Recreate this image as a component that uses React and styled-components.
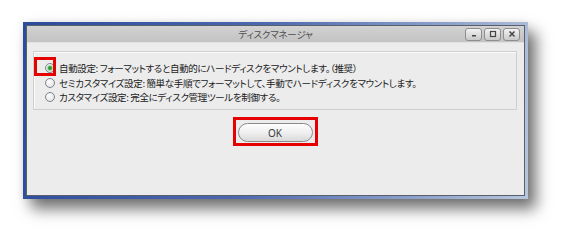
import React from 'react'
import styled, { createGlobalStyle } from 'styled-components'

const GlobalStyle = createGlobalStyle`
    html, body {
        margin: 0;
        padding: 0;
        background: #ffffff;
    }
    body {
        font-family: "Noto Sans CJK JP", "Noto Sans", sans-serif;
        font-feature-settings: "palt";
    }
`

const Page = styled.div`
    width: 570px;
    height: 241px;
    padding: 22px 0 0 23px;
    box-sizing: border-box;
    overflow: hidden;
`

const Window = styled.div`
    width: 505px;
    height: 177px;
    box-sizing: border-box;
    padding: 3px;
    background: linear-gradient(100deg, #2b4b9b 0%, #4c68ae 45%, #8ea3cc 80%, #b8c6dc 100%);
    box-shadow: 8px 10px 14px rgba(0, 0, 0, 0.55), 0 0 8px rgba(0, 0, 0, 0.08);
    display: flex;
`

const Frame = styled.div`
    flex: 1;
    display: flex;
    flex-direction: column;
    border: 1px solid #59606c;
    background: #ececec;
`

const TitleBar = styled.div`
    height: 17px;
    display: grid;
    grid-template-columns: 1fr auto 1fr;
    align-items: center;
    background: linear-gradient(#d2d2d2, #c3c3c3);
    border-bottom: 1px solid #e2e2e2;
    box-sizing: border-box;
`

const Title = styled.span`
    grid-column: 2;
    font-size: 9.5px;
    color: #4d4d4d;
    letter-spacing: -0.2px;
`

const Controls = styled.div`
    grid-column: 3;
    justify-self: end;
    display: flex;
    gap: 2px;
    margin-right: 4px;
`

const CtrlButton = styled.span`
    width: 17px;
    height: 13px;
    box-sizing: border-box;
    border: 1px solid #8d8d8d;
    border-radius: 3px;
    background: linear-gradient(#f2f2f2, #c9c9c9);
    display: flex;
    align-items: center;
    justify-content: center;
`

const Body = styled.div`
    flex: 1;
    padding: 8px 7px 0 6px;
    display: flex;
    flex-direction: column;
    align-items: center;
`

const GroupBox = styled.div`
    align-self: stretch;
    height: 59px;
    box-sizing: border-box;
    border: 1px solid #cfcfcf;
    box-shadow: inset 1px 1px 0 #fafafa;
    padding: 9px 0 0 11px;
    display: flex;
    flex-direction: column;
`

const Option = styled.label`
    position: relative;
    display: flex;
    align-items: center;
    height: 14.5px;
    font-size: 9.5px;
    letter-spacing: -0.35px;
    color: #1a1a1a;
    white-space: nowrap;
`

const Radio = styled.span`
    width: 10px;
    height: 10px;
    box-sizing: border-box;
    border-radius: 50%;
    border: 1px solid #7d8590;
    background: radial-gradient(circle at 40% 35%, #ffffff, #dcdcdc);
    margin-right: 4px;
    display: flex;
    align-items: center;
    justify-content: center;
    &::after {
        content: "";
        width: 4px;
        height: 4px;
        border-radius: 50%;
        background: ${p => (p.$checked ? '#2f9a35' : 'transparent')};
        box-shadow: ${p => (p.$checked ? '0 0 1px 1px rgba(80,190,80,0.5)' : 'none')};
    }
`

const Marker = styled.span`
    position: absolute;
    left: -11px;
    top: -4px;
    width: 22px;
    height: 19px;
    box-sizing: border-box;
    border: 3px solid #e60000;
    pointer-events: none;
`

const Highlight = styled.div`
    margin-top: 7px;
    border: 3px solid #e60000;
    padding: 3px 2px 1px;
`

const OkButton = styled.button`
    display: block;
    width: 75px;
    height: 19px;
    border: 1px solid #8a8a8a;
    border-radius: 10px;
    background: linear-gradient(#fdfdfd 0%, #f0f0f0 50%, #d9d9d9 100%);
    font-family: "Noto Sans", "Liberation Sans", sans-serif;
    font-size: 10px;
    color: #3a3a3a;
    padding: 0;
`

const options = [
    { label: '自動設定: フォーマットすると自動的にハードディスクをマウントします。（推奨）', checked: true },
    { label: 'セミカスタマイズ設定: 簡単な手順でフォーマットして、手動でハードディスクをマウントします。' },
    { label: 'カスタマイズ設定: 完全にディスク管理ツールを制御する。' },
]

function App() {
    return (
        <Page>
            <GlobalStyle />
            <Window>
                <Frame>
                    <TitleBar>
                        <Title>ディスクマネージャ</Title>
                        <Controls>
                            <CtrlButton>
                                <svg width="8" height="8" viewBox="0 0 8 8"><rect x="2" y="5" width="4" height="1.5" fill="#444" /></svg>
                            </CtrlButton>
                            <CtrlButton>
                                <svg width="8" height="8" viewBox="0 0 8 8"><rect x="1.5" y="1.5" width="5" height="5" fill="none" stroke="#444" strokeWidth="1.2" /></svg>
                            </CtrlButton>
                            <CtrlButton>
                                <svg width="8" height="8" viewBox="0 0 8 8"><path d="M1.5 1.5 L6.5 6.5 M6.5 1.5 L1.5 6.5" stroke="#444" strokeWidth="1.5" /></svg>
                            </CtrlButton>
                        </Controls>
                    </TitleBar>
                    <Body>
                        <GroupBox>
                            {options.map((o, i) => (
                                <Option key={i}>
                                    {o.checked && <Marker />}
                                    <Radio $checked={o.checked} />
                                    {o.label}
                                </Option>
                            ))}
                        </GroupBox>
                        <Highlight>
                            <OkButton>OK</OkButton>
                        </Highlight>
                    </Body>
                </Frame>
            </Window>
        </Page>
    )
}

export default App
